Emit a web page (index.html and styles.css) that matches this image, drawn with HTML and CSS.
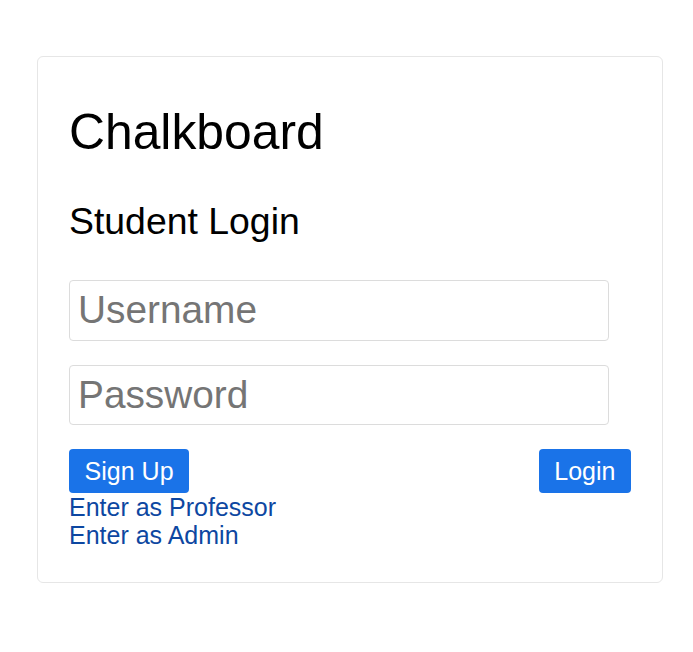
FILE: index.html
```html
<!DOCTYPE html>
<html lang="en">
<head>
<meta charset="utf-8">
<title>Chalkboard</title>
<link rel="stylesheet" href="styles.css">
</head>
<body>
<main class="card">
  <h1 class="title">Chalkboard</h1>
  <h2 class="subtitle">Student Login</h2>
  <form class="form">
    <input class="field" type="text" placeholder="Username">
    <input class="field" type="password" placeholder="Password">
    <div class="actions">
      <button type="button" class="btn">Sign Up</button>
      <button type="submit" class="btn">Login</button>
    </div>
  </form>
  <div class="links">
    <a class="link" href="#">Enter as Professor</a>
    <a class="link" href="#">Enter as Admin</a>
  </div>
</main>
</body>
</html>
```

FILE: styles.css
```css
* { box-sizing: border-box; }
html, body { margin: 0; padding: 0; background: #fff; }
body {
  font-family: "Liberation Sans", Arial, sans-serif;
  font-size: 24.8px;
  color: #000;
}
.card {
  width: 626px;
  margin: 56px 0 0 37px;
  border: 1px solid #e6e6e6;
  border-radius: 6px;
  padding: 46px 31px 32px 31px;
}
.title {
  margin: 0;
  font-size: 49.8px;
  font-weight: 400;
  line-height: 1.2;
}
.subtitle {
  margin: 36.5px 0 0;
  font-size: 37.4px;
  font-weight: 400;
  line-height: 1.2;
}
.form {
  margin-top: 36px;
  display: flex;
  flex-direction: column;
  gap: 24px;
}
.field {
  width: 540px;
  height: 60.5px;
  padding: 6px 8px;
  font-family: "Liberation Sans", Arial, sans-serif;
  font-size: 38.8px;
  line-height: 46.5px;
  border: 1px solid #dcdcdc;
  border-radius: 4px;
  color: #212121;
  background: #fff;
  outline: none;
}
.field::placeholder { color: #757575; opacity: 1; }
.actions {
  display: flex;
  justify-content: space-between;
  align-items: center;
  margin-top: -0.5px;
}
.btn {
  font-family: "Liberation Sans", Arial, sans-serif;
  font-size: 25px;
  line-height: 36px;
  padding: 4px 15.6px;
  border: none;
  border-radius: 4px;
  background: #1a73e8;
  color: #fff;
  cursor: pointer;
}
.links {
  display: flex;
  flex-direction: column;
  align-items: flex-start;
}
.link {
  color: #0d47a1;
  text-decoration: none;
  font-size: 25px;
  line-height: 28.5px;
}
```
